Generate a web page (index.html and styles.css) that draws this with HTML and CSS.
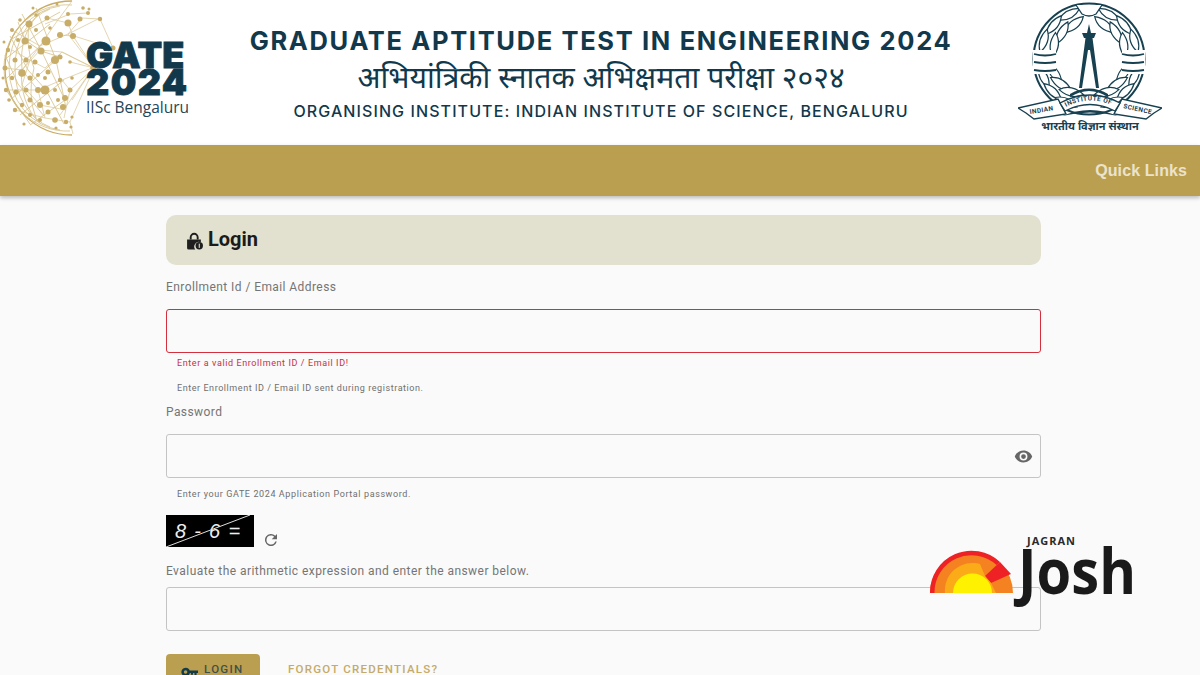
FILE: index.html
```html
<!DOCTYPE html>
<html lang="en">
<head>
<meta charset="utf-8">
<title>GATE 2024 Login</title>
<link rel="stylesheet" href="styles.css">
</head>
<body>
<header class="masthead">
  <div class="gate-logo">
    <svg class="globe" viewBox="0 0 125 136" aria-hidden="true">
      <path class="globe-rim" d="M72 1A67 67 0 0 0 72 135"/>
      <path class="globe-mesh" d="M72 5A63 63 0 0 0 4 68A63 63 0 0 0 70 131M60 6A58 62 0 0 0 9 68A58 62 0 0 0 60 130M50 9A50 60 0 0 0 15 68A50 60 0 0 0 50 127M40 13A42 56 0 0 0 22 68A42 56 0 0 0 40 123M30 20A30 50 0 0 0 34 68A30 50 0 0 0 36 118M10 40L60 12M4 60L50 24M5 80L46 40M10 100L56 60M20 115L64 80M30 125L68 98M10 36L28 70 46 90 64 124M5 55L18 84 44 116M22 14L42 52 64 98M36 8L56 60 66 108M6 90L30 124M18 22L25 40 41 51 60 57"/>
      <path class="globe-lines" d="M72 1L55 24 40 46 22 70 38 90 45 118M12 30L40 46 68 34 100 18M5 68L22 70 40 50 62 52 94 68M6 90L38 90 62 80 92 68M15 110L45 118 70 122M68 34L82 18 100 19M68 34L94 68 112 48M62 52L94 68 70 90 64 118M62 80L70 90M60 35L73 36M74 36L112 48M70 122L73 134M94 68L70 122M45 24L70 14 88 13M30 60L45 68 62 52M12 50L30 60 22 85 40 105 66 110M73 36L94 68M100 19L113 48M47 18L68 23 73 36M70 62L94 68M93 68L72 100M93 68L60 115"/>
      <g class="globe-dots">
        <circle cx="29" cy="24" r="3.500"/><circle cx="46" cy="41" r="4.500"/><circle cx="41" cy="51" r="3.500"/><circle cx="25" cy="41" r="3.500"/>
        <circle cx="55" cy="60" r="4"/><circle cx="60" cy="57" r="2.500"/><circle cx="22" cy="73" r="3.800"/><circle cx="45" cy="90" r="4.500"/>
        <circle cx="65" cy="98" r="3"/><circle cx="63" cy="107" r="3"/><circle cx="55" cy="120" r="2.800"/><circle cx="38" cy="90" r="3"/>
        <circle cx="47" cy="18" r="2.500"/><circle cx="68" cy="14" r="2"/><circle cx="88" cy="13" r="2"/><circle cx="83" cy="8" r="1.800"/>
        <circle cx="89" cy="9" r="1.500"/><circle cx="68" cy="23" r="3.500"/><circle cx="80" cy="19" r="2.500"/><circle cx="100" cy="19" r="2.200"/>
        <circle cx="60" cy="35" r="3"/><circle cx="73" cy="36" r="3"/><circle cx="113" cy="48" r="2.500"/><circle cx="70" cy="62" r="1.800"/>
        <circle cx="93" cy="68" r="2.800"/><circle cx="15" cy="60" r="2.500"/><circle cx="26" cy="60" r="2.500"/><circle cx="30" cy="47" r="2"/>
        <circle cx="12" cy="30" r="2"/><circle cx="5" cy="68" r="2.500"/><circle cx="6" cy="90" r="2.200"/><circle cx="15" cy="110" r="2.200"/>
        <circle cx="8" cy="50" r="2.200"/><circle cx="18" cy="40" r="2"/><circle cx="36" cy="15" r="1.800"/><circle cx="20" cy="20" r="1.800"/>
        <circle cx="36" cy="30" r="2"/><circle cx="50" cy="28" r="1.800"/><circle cx="35" cy="62" r="2.500"/><circle cx="48" cy="72" r="2.500"/>
        <circle cx="30" cy="78" r="2.500"/><circle cx="12" cy="78" r="2.200"/><circle cx="16" cy="92" r="2.500"/><circle cx="26" cy="90" r="2.500"/>
        <circle cx="30" cy="100" r="2.500"/><circle cx="22" cy="105" r="2.200"/><circle cx="40" cy="105" r="3"/><circle cx="30" cy="115" r="2"/>
        <circle cx="40" cy="120" r="2"/><circle cx="48" cy="112" r="2.500"/><circle cx="70" cy="90" r="2.500"/><circle cx="60" cy="80" r="2.200"/>
        <circle cx="55" cy="90" r="2"/><circle cx="66" cy="122" r="2.200"/><circle cx="72" cy="117" r="1.600"/><circle cx="71" cy="127" r="1.600"/>
        <circle cx="72" cy="78" r="1.800"/><circle cx="48" cy="103" r="2"/><circle cx="58" cy="100" r="2"/><circle cx="3" cy="78" r="1.500"/>
        <circle cx="4" cy="42" r="1.500"/><circle cx="9" cy="100" r="1.800"/><circle cx="24" cy="124" r="1.600"/><circle cx="56" cy="128" r="1.600"/>
        <circle cx="33" cy="8" r="1.500"/><circle cx="57" cy="4" r="1.500"/><circle cx="45" cy="78" r="2"/><circle cx="38" cy="75" r="2"/>
      </g>
    </svg>
    <div class="gate-mark">
      <span class="gate-word">GATE</span>
      <span class="gate-word gate-year">2024</span>
      <span class="gate-place">IISc Bengaluru</span>
    </div>
  </div>
  <div class="titles">
    <h1 class="title-en">GRADUATE APTITUDE TEST IN ENGINEERING 2024</h1>
    <p class="title-hi">अभियांत्रिकी स्नातक अभिक्षमता परीक्षा २०२४</p>
    <p class="title-org">ORGANISING INSTITUTE: INDIAN INSTITUTE OF SCIENCE, BENGALURU</p>
  </div>
  <svg class="seal" viewBox="1018 0 144 135" role="img" aria-label="Indian Institute of Science seal">
    <defs>
      <g id="leaves">
        <path d="M1077 11Q1088 3 1101 9Q1090 18 1077 11Z"/>
        <path d="M1077 25Q1086 14 1101 18Q1093 29 1077 25Z"/>
      </g>
      <g id="half">
        <use href="#leaves" transform="rotate(-24 1089 59)"/>
        <use href="#leaves" transform="rotate(-46 1089 59)"/>
        <use href="#leaves" transform="rotate(-68 1089 59)"/>
        <use href="#leaves" transform="rotate(-112 1089 59)"/>
        <use href="#leaves" transform="rotate(-132 1089 59)"/>
        <use href="#leaves" transform="rotate(-152 1089 59)"/>
      </g>
      <path id="arcL" d="M1030 114L1056 110"/>
      <path id="arcM" d="M1066 107Q1090 94 1116 107"/>
      <path id="arcR" d="M1123 108L1150 114"/>
    </defs>
    <circle class="seal-ring" cx="1089" cy="59" r="55.500"/>
    <g class="seal-leaf">
      <use href="#half"/>
      <use href="#half" transform="translate(2178 0) scale(-1 1)"/>
    </g>
    <path class="seal-shield" d="M1076 5L1082 14Q1089 18 1096 14L1102 5"/>
    <path class="seal-band" d="M1033 50H1056V74H1033ZM1122 50H1145V74H1122Z"/>
    <path class="seal-stripe" d="M1034 54Q1045 57 1056 54M1034 62Q1045 64 1056 62M1034 70Q1045 72 1056 70M1122 54Q1133 57 1144 54M1122 62Q1133 64 1144 62M1122 70Q1133 72 1144 70"/>
    <path class="seal-fill" d="M1089 24L1091 33H1096L1094 38H1092.500L1099 88H1096L1090 50H1088L1082 88H1079L1085.500 38H1084L1082 33H1087Z"/>
    <path class="seal-fill" d="M1070 97Q1089 85 1108 97L1108 94Q1089 83 1070 94Z"/>
    <path class="seal-ribbon" d="M1018 108L1058 99L1066 114L1034 119L1026 113Z"/>
    <path class="seal-ribbon" d="M1162 108L1122 99L1114 114L1146 119L1154 113Z"/>
    <path class="seal-ribbon" d="M1060 103Q1090 87 1120 103L1115 111Q1090 98 1065 111Z"/>
    <path class="seal-fill" d="M1062 116Q1090 104 1118 116Q1090 109 1062 116Z"/>
    <text class="seal-text"><textPath href="#arcL">INDIAN</textPath></text>
    <text class="seal-text"><textPath href="#arcM">INSTITUTE OF</textPath></text>
    <text class="seal-text"><textPath href="#arcR">SCIENCE</textPath></text>
    <text class="seal-hindi" x="1090" y="130" text-anchor="middle">भारतीय विज्ञान संस्थान</text>
  </svg>
</header>

<nav class="band"><a class="quick-links">Quick Links</a></nav>

<main class="login">
  <h2 class="login-head">
    <svg class="lock" viewBox="0 0 16 17" aria-hidden="true"><path d="M3.500 7V5a4.200 4.200 0 0 1 8.400 0v2h-1.800V5a2.400 2.400 0 0 0-4.800 0v2Z"/><path d="M1 7h13v2.600a4.500 4.500 0 0 0-5.200 7H2.500A1.500 1.500 0 0 1 1 15Z"/><circle cx="12.500" cy="13" r="3.500"/><rect class="lock-i" x="12" y="11" width="1" height="4"/></svg>
    <span>Login</span>
  </h2>

  <label class="label label-first">Enrollment Id / Email Address</label>
  <div class="input input-error"></div>
  <p class="note note-error">Enter a valid Enrollment ID / Email ID!</p>
  <p class="note note-gap">Enter Enrollment ID / Email ID sent during registration.</p>

  <label class="label label-pass">Password</label>
  <div class="input input-pass">
    <svg class="eye" viewBox="0 0 24 24" aria-hidden="true"><path d="M12 4.500C7 4.500 2.700 7.600 1 12c1.700 4.400 6 7.500 11 7.500s9.300-3.100 11-7.500c-1.700-4.400-6-7.500-11-7.500Zm0 12.500a5 5 0 1 1 0-10 5 5 0 0 1 0 10Zm0-8a3 3 0 1 0 0 6 3 3 0 0 0 0-6Z"/></svg>
  </div>
  <p class="note note-pass">Enter your GATE 2024 Application Portal password.</p>

  <div class="captcha-row">
    <div class="captcha"><span>8 - 6 =</span><svg class="captcha-strike" viewBox="0 0 88 32" preserveAspectRatio="none" aria-hidden="true"><path d="M0 32L84 0"/></svg></div>
    <svg class="refresh" viewBox="0 0 24 24" aria-hidden="true"><path d="M17.650 6.350A8 8 0 1 0 19.730 14h-2.080A6 6 0 1 1 12 6c1.660 0 3.140.69 4.220 1.780L13 11h7V4Z"/></svg>
  </div>
  <label class="label label-captcha">Evaluate the arithmetic expression and enter the answer below.</label>
  <div class="input"></div>

  <div class="actions">
    <button class="btn-login">
      <svg class="key" viewBox="0 0 24 14" aria-hidden="true"><path d="M6.500 1a6 6 0 1 1-5.600 8A6 6 0 0 1 6.500 1Zm0 3.500a2.500 2.500 0 1 0 0 5 2.500 2.500 0 0 0 0-5ZM12 5h12v3.500h-2V12h-3V8.500h-2V11h-3V8.500h-2Z"/></svg>
      <span>LOGIN</span>
    </button>
    <a class="forgot">FORGOT CREDENTIALS?</a>
  </div>
</main>

<aside class="josh">
  <svg class="sun" viewBox="0 0 83 43" aria-hidden="true">
    <path class="sun-orange" d="M0 43A41.500 41.500 0 0 1 83 43Z"/>
    <path class="sun-red" d="M0 43A41.500 41.500 0 0 1 70 12L66.500 15A37 37 0 0 0 4.500 43Z"/>
    <path class="sun-red" d="M70 12L81 24L61 33L55 26Z"/>
    <path class="sun-amber" d="M15 43A27.500 27.500 0 0 1 50 14L55 26L61 33L66 43Z"/>
    <path class="sun-yellow" d="M23 43A19.500 19.500 0 0 1 62 43Z"/>
  </svg>
  <div class="josh-words">
    <span class="jagran">JAGRAN</span>
    <span class="josh-word">Josh</span>
  </div>
</aside>
</body>
</html>
```
FILE: styles.css
```css
* { box-sizing: border-box; }
html, body { margin: 0; height: 675px; overflow: hidden; }
body { background: #fafafa; font-family: Roboto, "Liberation Sans", sans-serif; position: relative; }
h1, h2, p { margin: 0; font-weight: normal; }

.masthead { height: 145px; background: #fff; display: flex; position: relative; }
.gate-logo { width: 250px; display: flex; flex: none; }
.globe { width: 125px; height: 136px; flex: none; }
.globe-rim { fill: none; stroke: #c9ab63; stroke-width: 1.300; }
.globe-mesh { fill: none; stroke: #d6c088; stroke-width: .8; }
.globe-lines { fill: none; stroke: #d8c490; stroke-width: .7; }
.globe-dots { fill: #c8ad68; }
.gate-mark { display: flex; flex-direction: column; margin: 42px 0 0 -39px; position: relative; color: #11384b; }
.gate-word { font: 900 36px/27px Inter, Roboto, sans-serif; letter-spacing: .2px; -webkit-text-stroke: .8px #11384b; }
.gate-year { letter-spacing: 1.400px; }
.gate-place { font: 400 15.500px/19px "Open Sans", sans-serif; color: #1f4659; margin-top: 2px; white-space: nowrap; }

.titles { width: 702px; flex: none; display: flex; flex-direction: column; align-items: center; color: #11384b; }
.title-en { font: 700 25.500px/30px Inter, Roboto, sans-serif; letter-spacing: 1.650px; margin-top: 26px; white-space: nowrap; }
.title-hi { font: 400 30.200px/40px "Noto Sans Devanagari", "Noto Sans", sans-serif; margin-top: 5px; white-space: nowrap; }
.title-org { font: 500 16px/22px Inter, Roboto, sans-serif; letter-spacing: 1.100px; margin-top: -1px; white-space: nowrap; }

.seal { width: 144px; height: 135px; flex: none; margin-left: 66px; }
.seal-ring { fill: none; stroke: #174050; stroke-width: 2; }
.seal-leaf { fill: #fff; stroke: #174050; stroke-width: 1.200; }
.seal-shield { fill: #fff; stroke: #174050; stroke-width: 1.300; }
.seal-band { fill: #fff; }
.seal-stripe { fill: none; stroke: #174050; stroke-width: 1.800; }
.seal-fill { fill: #174050; }
.seal-ribbon { fill: #fff; stroke: #174050; stroke-width: 1.400; }
.seal-text { font: 700 6.500px Roboto, sans-serif; fill: #174050; letter-spacing: .4px; }
.seal-hindi { font: 700 11px "Noto Sans Devanagari", "Noto Sans", sans-serif; fill: #174050; }

.band { height: 51px; background: #bb9f50; box-shadow: 0 2px 4px rgba(0,0,0,.25); display: flex; align-items: center; justify-content: flex-end; padding-right: 13px; position: relative; }
.quick-links { font: 700 16px/20px "Liberation Sans", sans-serif; letter-spacing: .1px; color: #ebe3cb; }

.login { width: 875px; margin: 19px 0 0 166px; }
.login-head { height: 50px; background: #e2e1cf; border-radius: 10px; display: flex; align-items: center; gap: 5px; padding: 0 0 2px 20px; font: 700 20px/24px Roboto, sans-serif; color: #1b1b1b; }
.lock { width: 17px; height: 18px; fill: #1f1f1f; margin-top: 3px; }
.lock-i { fill: #e2e1cf; }
.label { display: block; font: 400 12px/14px Roboto, sans-serif; letter-spacing: .42px; color: #757575; }
.label-first { margin-top: 15px; }
.input { height: 44px; border: 1px solid #c4c4c4; border-radius: 3px; background: #fafafa; display: flex; align-items: center; justify-content: flex-end; padding-right: 7px; }
.input-error { margin-top: 15px; border-color: #d32f3f; }
.note { font: 400 9px/11px Roboto, sans-serif; letter-spacing: .6px; color: #6f6f6f; padding-left: 11px; }
.note-error { margin-top: 5px; color: #c9303e; }
.note-gap { margin-top: 14px; letter-spacing: .56px; }
.label-pass { margin-top: 11px; }
.input-pass { margin-top: 15px; }
.eye { width: 19px; height: 19px; fill: #666; }
.note-pass { margin-top: 11px; }
.captcha-row { display: flex; align-items: flex-end; gap: 8px; margin-top: 15px; }
.captcha { width: 88px; height: 32px; background: #000; color: #eee; position: relative; font: italic 400 20px/33px "Liberation Sans", sans-serif; padding-left: 9px; white-space: nowrap; letter-spacing: 1.300px; }
.captcha-strike { position: absolute; inset: 0; width: 88px; height: 32px; }
.captcha-strike path { stroke: #ddd; stroke-width: 1; fill: none; }
.refresh { width: 18px; height: 18px; fill: #666; margin-bottom: -2px; }
.label-captcha { margin-top: 17px; letter-spacing: .45px; }
.label-captcha + .input { margin-top: 9px; }
.actions { display: flex; align-items: flex-start; gap: 28px; margin-top: 23px; }
.btn-login { width: 94px; height: 36px; background: #bb9f50; border: 0; border-radius: 4px; display: flex; align-items: flex-start; gap: 6px; padding: 8px 0 0 15px; font: 500 11.500px/14px Roboto, sans-serif; letter-spacing: 1.300px; color: #3f5049; }
.key { width: 17px; height: 10px; fill: #123c4c; margin-top: 5px; }
.forgot { font: 500 11.500px/14px Roboto, sans-serif; letter-spacing: 1.250px; color: #c4ab69; padding-top: 8px; }

.josh { position: absolute; left: 930px; top: 530px; display: flex; align-items: flex-start; }
.sun { width: 83px; height: 43px; margin-top: 20px; flex: none; }
.sun-orange { fill: #f58220; }
.sun-red { fill: #ee2224; }
.sun-amber { fill: #fbab18; }
.sun-yellow { fill: #fff200; }
.josh-words { display: flex; flex-direction: column; margin-left: 5px; }
.jagran { font: 700 11px/14px "Open Sans", sans-serif; letter-spacing: 1px; color: #2a2a2a; margin: 4px 0 0 9px; }
.josh-word { font: 700 63px/60px "Open Sans", sans-serif; color: #1a1a1a; margin-top: -8px; transform: scaleX(.89); transform-origin: left; }
```
